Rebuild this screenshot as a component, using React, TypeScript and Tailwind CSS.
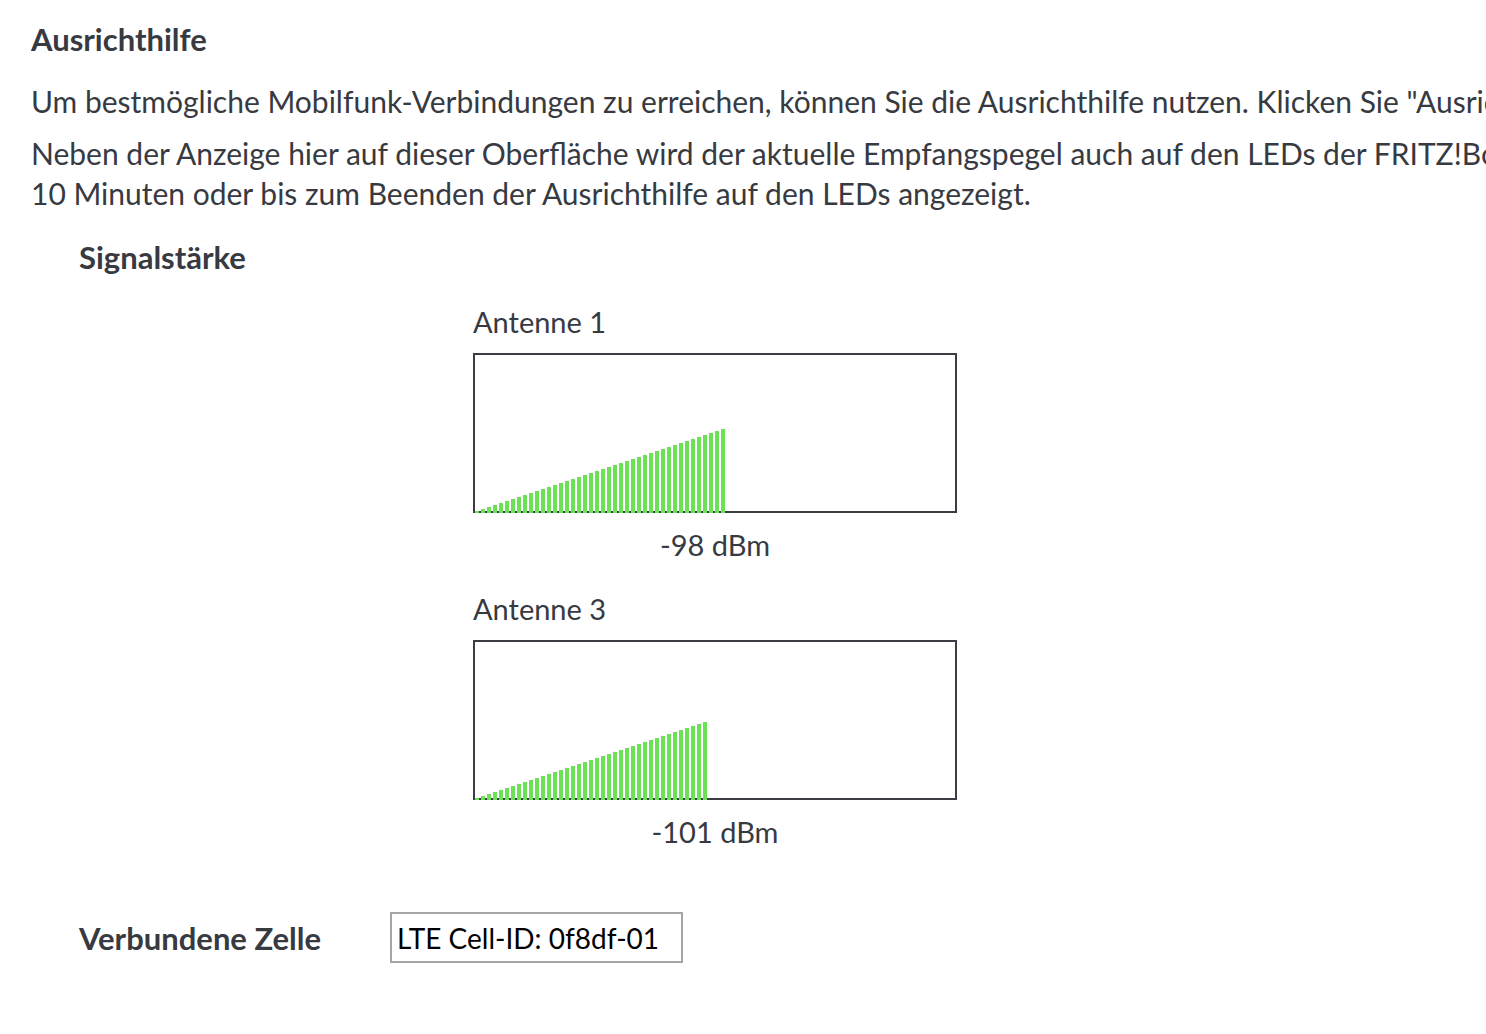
const antennas = [
  { label: "Antenne 1", bars: 42, value: "-98 dBm" },
  { label: "Antenne 3", bars: 39, value: "-101 dBm" },
];

function SignalChart({ label, bars, value }: { label: string; bars: number; value: string }) {
  return (
    <div className="w-[484px]">
      <p className="text-[29px] leading-10">{label}</p>
      <div className="mt-[11px] flex h-[160px] items-end gap-[2px] border-2 border-[#3b3d44]">
        {Array.from({ length: bars }, (_, i) => (
          <div key={i} className="-mb-[2px] w-[4px] shrink-0 bg-[#6be256]" style={{ height: (i + 1) * 2 }} />
        ))}
      </div>
      <p className="mt-3 text-center text-[29px] leading-10">{value}</p>
    </div>
  );
}

export default function App() {
  return (
    <div className="min-h-screen overflow-hidden bg-white pl-[31px] pt-[19px] font-['Lato',sans-serif] text-[#373a41]">
      <h1 className="text-[31px] font-bold leading-10">Ausrichthilfe</h1>
      <p className="mt-[22px] whitespace-nowrap text-[30px] leading-10">
        Um bestmögliche Mobilfunk-Verbindungen zu erreichen, können Sie die Ausrichthilfe nutzen. Klicken Sie "Ausrichthilfe starten", um die Anzeige zu aktivieren.
      </p>
      <p className="mt-3 whitespace-nowrap text-[30px] leading-10">
        Neben der Anzeige hier auf dieser Oberfläche wird der aktuelle Empfangspegel auch auf den LEDs der FRITZ!Box angezeigt. Der Empfangspegel wird für
        <br />
        10 Minuten oder bis zum Beenden der Ausrichthilfe auf den LEDs angezeigt.
      </p>

      <div className="ml-12 mt-6">
        <h2 className="text-[31px] font-bold leading-10">Signalstärke</h2>
      </div>

      <div className="ml-[442px] mt-[25px] flex flex-col gap-6">
        {antennas.map((a) => (
          <SignalChart key={a.label} label={a.label} bars={a.bars} value={a.value} />
        ))}
      </div>

      <div className="ml-12 mt-[60px] flex items-center">
        <span className="w-[311px] text-[31px] font-bold leading-10">Verbundene Zelle</span>
        <div className="flex h-[51px] w-[293px] items-center border-2 border-[#a5a5a5] pl-[5px] text-[28px] text-black">
          LTE Cell-ID: 0f8df-01
        </div>
      </div>
    </div>
  );
}
